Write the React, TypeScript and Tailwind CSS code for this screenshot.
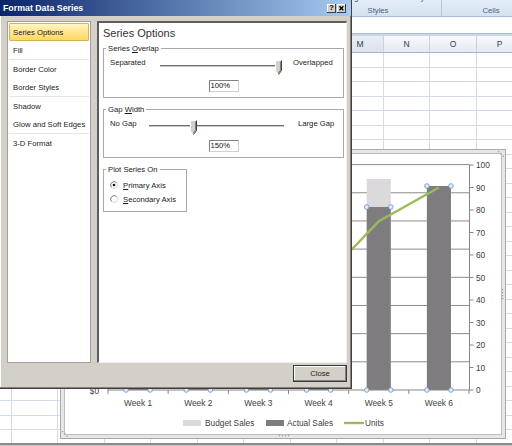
import React from "react";

const COLS: [string, string][] = [
  ["E", "w-[47px]"],
  ["F", "w-[46px]"],
  ["G", "w-[47px]"],
  ["H", "w-[46px]"],
  ["I", "w-[47px]"],
  ["J", "w-[46px]"],
  ["K", "w-[47px]"],
  ["L", "w-[46px]"],
  ["M", "w-[47px]"],
  ["N", "w-[46px]"],
  ["O", "w-[47px]"],
  ["P", "w-[46px]"],
];

function Sheet() {
  const rows = Array.from({ length: 27 }, (_, i) => i);
  return (
    <div className="flex flex-col h-full">
      <div className="h-[17px] shrink-0 flex bg-[linear-gradient(#e4ecf7,#d6e2f1)] border-b border-[#a9bed8] overflow-hidden">
        <div className="ml-[315px] w-[127px] shrink-0 flex flex-col items-center border-r border-[#b7c9de]">
          <div className="-mt-[7px] h-[9px] w-full flex justify-around text-[7.7px] leading-[9px] text-[#3c4f6b]">
            <span>Formatting</span>
            <span>as Table</span>
            <span>Styles</span>
          </div>
          <div className="mt-[4px] text-[7.7px] leading-[9px] text-[#4b5f7d]">Styles</div>
        </div>
        <div className="w-[98px] shrink-0 flex flex-col items-center">
          <div className="-mt-[7px] h-[9px]" />
          <div className="mt-[4px] text-[7.7px] leading-[9px] text-[#4b5f7d]">Cells</div>
        </div>
      </div>
      <div className="h-[16px] shrink-0 bg-white" />
      <div className="h-[3px] shrink-0 bg-[#c9d7e8] border-t border-[#a9bdd5]" />
      <div className="h-[17px] shrink-0 flex -ml-[35px] border-b border-[#9eb6ce] bg-[linear-gradient(#f7f9fc,#e4eaf2)]">
        {COLS.map(([n, w]) => (
          <div
            key={n}
            className={`${w} shrink-0 flex items-center justify-center border-r border-[#c5d2e1] text-[8.5px] leading-[10px] text-[#2a3f5c] ${n === "M" ? "bg-[linear-gradient(#e9edf2,#dde3ea)]" : ""}`}
          >
            {n}
          </div>
        ))}
      </div>
      <div className="flex-1 overflow-hidden flex flex-col -ml-[35px]">
        {rows.map((r) => (
          <div key={r} className="h-[14.5px] shrink-0 flex border-b border-[#d5dbe5]">
            {COLS.map(([n, w]) => (
              <div key={n} className={`${w} shrink-0 border-r border-[#d5dbe5]`} />
            ))}
          </div>
        ))}
      </div>
      <div className="h-[3px] shrink-0 bg-[#8a8a8a] border-b border-[#c8c8c8]" />
    </div>
  );
}

const X0 = 108;
const CAT = (469 - 108) / 6;
const BW = CAT / 2.5;
const ACTUAL = [255, 240, 268, 250, 207, 186];
const BUDGET = [236, 226, 250, 232, 179, 190];
const UNITS = [20, 28, 36, 47, 75, 90];
const yU = (v: number) => 390 - v * 2.25;
const GRID = Array.from({ length: 8 }, (_, k) => 164.6 + k * 28.175);

function Chart() {
  const font = "Liberation Sans, Arial, sans-serif";
  const linePts = UNITS.map((v, i) => `${X0 + CAT * (i + 0.5)},${yU(v)}`).join(" ");
  return (
    <div className="absolute left-[60px] top-[149px] w-[446px] h-[290px] border border-[#a9a9a9] bg-[#e6e6e6] p-[3px]">
      <div className="w-full h-full border border-[#bdbdbd] bg-white">
        <svg width="436" height="280" viewBox="65 154 436 280" className="block">
          {GRID.map((y, k) => (
            <line key={k} x1={X0} x2={469} y1={y} y2={y} stroke="#8c8c8c" strokeWidth="1" />
          ))}
          {BUDGET.map((t, i) => (
            <rect key={"b" + i} x={X0 + CAT * (i + 0.5) - BW / 2} y={t} width={BW} height={390 - t} fill="#dcd9dc" />
          ))}
          {ACTUAL.map((t, i) => (
            <rect key={"a" + i} x={X0 + CAT * (i + 0.5) - BW / 2} y={t} width={BW} height={390 - t} fill="#7f7c7f" />
          ))}
          <line x1={X0} x2={X0} y1={164.6} y2={390} stroke="#868686" />
          <line x1={469.5} x2={469.5} y1={164.6} y2={390} stroke="#868686" />
          <line x1={X0} x2={470} y1={390} y2={390} stroke="#868686" />
          {Array.from({ length: 7 }, (_, k) => (
            <line key={"xt" + k} x1={X0 + CAT * k} x2={X0 + CAT * k} y1={390} y2={394} stroke="#868686" />
          ))}
          {Array.from({ length: 11 }, (_, k) => (
            <g key={"yt" + k}>
              <line x1={469.5} x2={473.5} y1={yU(k * 10)} y2={yU(k * 10)} stroke="#868686" />
              <text x={476} y={yU(k * 10) + 3} fontSize="8.3" fill="#404040" fontFamily={font}>
                {k * 10}
              </text>
            </g>
          ))}
          <text x={99} y={394} fontSize="8.3" fill="#404040" fontFamily={font} textAnchor="end">
            $0
          </text>
          <polyline points={linePts} fill="none" stroke="#9bbb59" strokeWidth="2.4" strokeLinejoin="round" />
          {ACTUAL.map((t, i) => {
            const l = X0 + CAT * (i + 0.5) - BW / 2;
            const r = l + BW;
            return (
              <g key={"h" + i} fill="#e2edf9" stroke="#6f9bd1" strokeWidth="0.9">
                <circle cx={l} cy={t} r="2.3" />
                <circle cx={r} cy={t} r="2.3" />
                <circle cx={l} cy={390} r="2.3" />
                <circle cx={r} cy={390} r="2.3" />
              </g>
            );
          })}
          {Array.from({ length: 6 }, (_, i) => (
            <text key={"wl" + i} x={X0 + CAT * (i + 0.5)} y={406} fontSize="8.4" fill="#404040" fontFamily={font} textAnchor="middle">
              {`Week ${i + 1}`}
            </text>
          ))}
          <rect x={183} y={420} width={18} height={6} fill="#dcd9dc" />
          <text x={205} y={426} fontSize="8.3" fill="#404040" fontFamily={font}>
            Budget Sales
          </text>
          <rect x={266} y={420} width={18} height={6} fill="#7f7c7f" />
          <text x={287} y={426} fontSize="8.3" fill="#404040" fontFamily={font}>
            Actual Sales
          </text>
          <line x1={344} x2={364} y1={423} y2={423} stroke="#9bbb59" strokeWidth="2.4" />
          <text x={365} y={426} fontSize="8.3" fill="#404040" fontFamily={font}>
            Units
          </text>
        </svg>
      </div>
      <svg width="12" height="4" viewBox="0 0 12 4" className="absolute left-[217px] bottom-[0px]">
        {[1, 4, 7, 10].map((x) => (
          <rect key={x} x={x} y={1} width="1.2" height="1.2" fill="#9a9a9a" />
        ))}
      </svg>
      <svg width="4" height="12" viewBox="0 0 4 12" className="absolute right-[0px] top-[138px]">
        {[1, 4, 7, 10].map((y) => (
          <rect key={y} x={1} y={y} width="1.2" height="1.2" fill="#9a9a9a" />
        ))}
      </svg>
      <svg width="8" height="8" viewBox="0 0 8 8" className="absolute right-[0px] top-[0px]">
        {[0, 1, 2].map((k) => (
          <rect key={k} x={1 + k * 2.3} y={1 + k * 2.3} width="1.2" height="1.2" fill="#9a9a9a" />
        ))}
      </svg>
      <svg width="8" height="8" viewBox="0 0 8 8" className="absolute left-[0px] bottom-[0px]">
        {[0, 1, 2].map((k) => (
          <rect key={k} x={1 + k * 2.3} y={1 + k * 2.3} width="1.2" height="1.2" fill="#9a9a9a" />
        ))}
      </svg>
    </div>
  );
}

function Thumb() {
  return (
    <svg width="7" height="15" viewBox="0 0 7 15" className="block">
      <path d="M0.5 0.5H6.5V10.5L3.5 14.5L0.5 10.5Z" fill="#d4d0c8" />
      <path d="M0.5 10.5V0.5H6" stroke="#ffffff" fill="none" />
      <path d="M6.5 0.5V10.5L3.5 14.5" stroke="#404040" fill="none" />
      <path d="M5.5 1.5V10.2L3.5 12.8" stroke="#808080" fill="none" />
    </svg>
  );
}

function Radio({ checked }: { checked?: boolean }) {
  return (
    <svg width="8" height="8" viewBox="0 0 8 8" className="block shrink-0">
      <circle cx="4" cy="4" r="3.5" fill="#ffffff" />
      <path d="M1.53 6.47 A3.5 3.5 0 0 1 6.47 1.53" stroke="#7a7a7a" fill="none" strokeWidth="1" />
      <path d="M6.47 1.53 A3.5 3.5 0 0 1 1.53 6.47" stroke="#d8d5cf" fill="none" strokeWidth="1" />
      {checked && <circle cx="4" cy="4" r="1.3" fill="#111111" />}
    </svg>
  );
}

function Field({ value }: { value: string }) {
  return (
    <div className="mx-auto w-[30px] h-[12px] border-t border-l border-[#808080] border-r border-b border-r-[#d4d0c8] border-b-[#d4d0c8] pl-[1px] text-[7.7px] leading-[10px] text-[#111]">
      {value}
    </div>
  );
}

function Dialog() {
  const groups = [
    ["Series Options", "Fill"],
    ["Border Color", "Border Styles"],
    ["Shadow", "Glow and Soft Edges"],
    ["3-D Format"],
  ];
  return (
    <div className="absolute left-0 top-0 w-[352px] h-[389px] bg-[#d4d0c8] border-r border-b border-[#404040] shadow-[inset_-1px_-1px_0_#808080,inset_1px_1px_0_#ffffff] flex flex-col">
      <div className="h-[16px] shrink-0 flex items-center pl-[3px] pr-[5px] bg-[linear-gradient(to_right,#0a246a,#a6caf0)]">
        <span className="text-[8.8px] leading-[10px] font-bold text-white">Format Data Series</span>
        <div className="ml-auto flex gap-[1px]">
          <div className="w-[9px] h-[9px] bg-[#d4d0c8] shadow-[inset_-1px_-1px_0_#404040,inset_1px_1px_0_#ffffff] flex items-center justify-center text-[7.5px] leading-[8px] font-bold text-black">
            ?
          </div>
          <div className="w-[9px] h-[9px] bg-[#d4d0c8] shadow-[inset_-1px_-1px_0_#404040,inset_1px_1px_0_#ffffff] flex items-center justify-center">
            <svg width="9" height="9" viewBox="0 0 9 9" className="block">
              <path d="M2.5 2.3L6.3 6.3M6.3 2.3L2.5 6.3" stroke="#000" strokeWidth="1.3" />
            </svg>
          </div>
        </div>
      </div>
      <div className="flex pl-[7px] pt-[5px] gap-[6px]">
        <div className="w-[84px] h-[342px] shrink-0 bg-white border border-[#a0a0a0] pt-[1px] px-[1px] flex flex-col">
          {groups.map((g, gi) => (
            <React.Fragment key={gi}>
              {gi > 0 && <div className="h-px shrink-0 bg-[#e6e6e6]" />}
              {g.map((item) =>
                item === "Series Options" ? (
                  <div
                    key={item}
                    className="h-[18px] shrink-0 flex items-center pl-[3px] border border-[#d7b257] rounded-[1px] bg-[linear-gradient(#fff6c4,#ffe690_50%,#ffd865)] text-[7.7px] leading-[9px] text-[#222]"
                  >
                    {item}
                  </div>
                ) : (
                  <div key={item} className="h-[18px] shrink-0 flex items-center pl-[4px] text-[7.7px] leading-[9px] text-[#222]">
                    {item}
                  </div>
                )
              )}
            </React.Fragment>
          ))}
        </div>
        <div className="w-[250px] h-[342px] shrink-0 bg-white border-l-2 border-t-2 border-r border-b border-l-[#5e5e5e] border-t-[#5e5e5e] border-r-[#f0f0f0] border-b-[#f0f0f0] pl-[4px] flex flex-col text-[#1a1a1a]">
          <div className="mt-[4px] text-[11px] leading-[13px] text-[#333]">Series Options</div>
          <fieldset className="mt-[3.5px] w-[241px] h-[54px] border border-[#a9a9a9]">
            <legend className="ml-[2px] px-[2px] text-[7.7px] leading-[9px]">
              Series <span className="underline">O</span>verlap
            </legend>
            <div className="flex items-start mt-[5px] pl-[6px] text-[7.7px] leading-[9px]">
              <span className="w-[50px] shrink-0">Separated</span>
              <div className="relative mt-[2.5px] w-[123px] h-[15px] shrink-0">
                <div className="absolute left-0 right-[2px] top-[5px] h-[2px] bg-[#6e6e6e] border-b border-[#c8c8c8]" />
                <div className="absolute top-0 left-[115px]">
                  <Thumb />
                </div>
              </div>
              <span className="ml-[10px]">Overlapped</span>
            </div>
            <div className="mt-[5px]">
              <Field value="100%" />
            </div>
          </fieldset>
          <fieldset className="mt-[7px] w-[241px] h-[53.5px] border border-[#a9a9a9]">
            <legend className="ml-[2px] px-[2px] text-[7.7px] leading-[9px]">
              Gap <span className="underline">W</span>idth
            </legend>
            <div className="flex items-start mt-[5px] pl-[6px] text-[7.7px] leading-[9px]">
              <span className="w-[39px] shrink-0">No Gap</span>
              <div className="relative mt-[1.5px] w-[137px] h-[15px] shrink-0">
                <div className="absolute left-0 right-[2px] top-[5px] h-[2px] bg-[#6e6e6e] border-b border-[#c8c8c8]" />
                <div className="absolute top-0 left-[41px]">
                  <Thumb />
                </div>
              </div>
              <span className="ml-[12px]">Large Gap</span>
            </div>
            <div className="mt-[5px]">
              <Field value="150%" />
            </div>
          </fieldset>
          <fieldset className="mt-[6.5px] w-[84px] h-[47.5px] border border-[#a9a9a9]">
            <legend className="ml-[2px] px-[2px] text-[7.7px] leading-[9px]">Plot Series On</legend>
            <div className="mt-[6px] h-[11px] flex items-center gap-[5px] pl-[6px] text-[7.7px] leading-[9px]">
              <Radio checked />
              <span>
                <span className="underline">P</span>rimary Axis
              </span>
            </div>
            <div className="mt-[3px] h-[11px] flex items-center gap-[5px] pl-[6px] text-[7.7px] leading-[9px]">
              <Radio />
              <span>
                <span className="underline">S</span>econdary Axis
              </span>
            </div>
          </fieldset>
        </div>
      </div>
      <div className="flex justify-end pr-[4px] pt-[2px]">
        <div className="w-[54px] h-[17px] border border-[#3a3a3a] bg-[#d4d0c8] shadow-[inset_-1px_-1px_0_#808080,inset_1px_1px_0_#ffffff] flex items-center justify-center text-[7.7px] leading-[9px] text-[#222]">
          Close
        </div>
      </div>
    </div>
  );
}

export default function App() {
  return (
    <div className="relative w-[512px] h-[446px] overflow-hidden bg-white font-['Liberation_Sans',Arial,sans-serif]">
      <Sheet />
      <Chart />
      <Dialog />
    </div>
  );
}
